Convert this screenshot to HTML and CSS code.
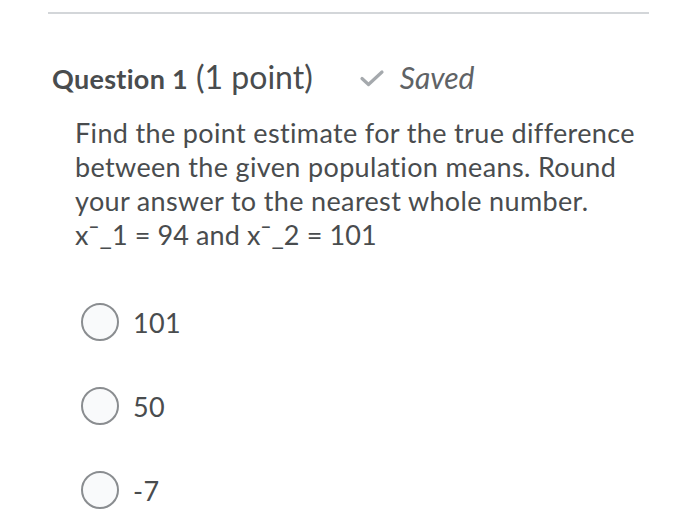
FILE: index.html
```html
<!DOCTYPE html>
<html>
<head>
<meta charset="utf-8">
<link rel="stylesheet" href="styles.css">
</head>
<body>
<div class="page">
  <div class="rule"></div>
  <div class="question">
    <h2 class="q-head">
      <span class="q-num">Question 1</span>
      <span class="q-pts">(1 point)</span>
      <span class="saved">
        <svg class="check" width="26" height="20" viewBox="0 0 26 20"><path d="M3 10.5 L9.5 16.5 L23 4" fill="none" stroke="#a5a9ad" stroke-width="3.2" stroke-linecap="round" stroke-linejoin="round"/></svg>
        <span class="saved-text">Saved</span>
      </span>
    </h2>
    <div class="q-body">
      <p class="q-text">Find the point estimate for the true difference between the given population means. Round your answer to the nearest whole number.<br><span class="formula">x¯_1 = 94 and x¯_2 = 101</span></p>
      <div class="options">
        <label class="option"><span class="radio"></span><span class="opt-text">101</span></label>
        <label class="option"><span class="radio"></span><span class="opt-text">50</span></label>
        <label class="option"><span class="radio"></span><span class="opt-text">-7</span></label>
      </div>
    </div>
  </div>
</div>
</body>
</html>
```

FILE: styles.css
```css
html, body {
  margin: 0;
  padding: 0;
  background: #ffffff;
}
body {
  font-family: Lato, "Open Sans", sans-serif;
  color: #494c4e;
}
.page {
  width: 700px;
  height: 532px;
  overflow: hidden;
  padding-top: 12px;
  box-sizing: border-box;
}
.rule {
  margin-left: 48px;
  width: 601px;
  height: 2px;
  background: #d3d6d9;
}
.question {
  padding-left: 52px;
}
.q-head {
  margin: 0;
  padding-top: 44px;
  display: flex;
  align-items: baseline;
  font-weight: normal;
  height: 38px;
  line-height: 38px;
}
.q-num {
  font-weight: 700;
  font-size: 27px;
  letter-spacing: 0.3px;
}
.q-pts {
  font-size: 32px;
  margin-left: 8px;
}
.saved {
  margin-left: 46px;
  display: inline-flex;
  align-items: baseline;
  color: #5f6366;
}
.check {
  align-self: center;
  position: relative;
  top: 1px;
}
.saved-text {
  font-style: italic;
  font-size: 30px;
  margin-left: 15px;
}
.q-body {
  padding-left: 23px;
}
.q-text {
  margin: 20px 0 0 0;
  max-width: 580px;
  font-size: 27px;
  letter-spacing: 0.35px;
  line-height: 34px;
}
.formula {
  letter-spacing: 0.1px;
}
.options {
  margin-top: 51px;
  display: flex;
  flex-direction: column;
  gap: 46px;
}
.option {
  display: flex;
  align-items: center;
  height: 38px;
  padding-left: 6px;
}
.radio {
  width: 34px;
  height: 34px;
  border: 2px solid #8a8d90;
  border-radius: 50%;
  background: #f9fafb;
  flex: none;
}
.opt-text {
  margin-left: 14px;
  font-size: 27px;
  letter-spacing: 0.35px;
}
```
